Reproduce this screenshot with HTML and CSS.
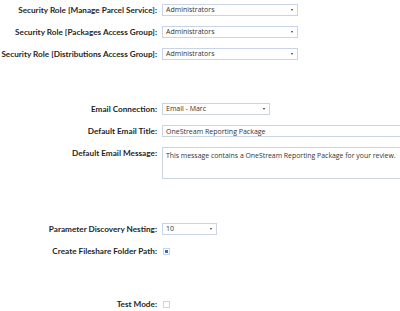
FILE: index.html
```html
<!DOCTYPE html>
<html lang="en">
<head>
    <meta charset="utf-8" />
    <title>Distribution Settings</title>
    <link rel="stylesheet" href="styles.css">
</head>
<body>
    <div class="settings">
        <div class="row">
            <label class="caption">Security Role [Manage Parcel Service]:</label>
            <span class="select-wrap wide">
                <select><option>Administrators</option></select>
            </span>
        </div>
        <div class="row">
            <label class="caption">Security Role [Packages Access Group]:</label>
            <span class="select-wrap wide">
                <select><option>Administrators</option></select>
            </span>
        </div>
        <div class="row">
            <label class="caption">Security Role [Distributions Access Group]:</label>
            <span class="select-wrap wide">
                <select><option>Administrators</option></select>
            </span>
        </div>

        <div class="row group-email">
            <label class="caption">Email Connection:</label>
            <span class="select-wrap medium">
                <select><option>Email - Marc</option></select>
            </span>
        </div>
        <div class="row">
            <label class="caption">Default Email Title:</label>
            <input class="text-box" type="text" value="OneStream Reporting Package" />
        </div>
        <div class="row top">
            <label class="caption">Default Email Message:</label>
            <textarea class="text-area">This message contains a OneStream Reporting Package for your review.</textarea>
        </div>

        <div class="row group-params">
            <label class="caption">Parameter Discovery Nesting:</label>
            <span class="select-wrap small">
                <select><option>10</option></select>
            </span>
        </div>
        <div class="row">
            <label class="caption">Create Fileshare Folder Path:</label>
            <input class="check" type="checkbox" checked />
        </div>

        <div class="row group-test">
            <label class="caption">Test Mode:</label>
            <input class="check" type="checkbox" />
        </div>
    </div>
</body>
</html>
```

FILE: styles.css
```css
* { box-sizing: border-box; margin: 0; padding: 0; }
body {
    font-family: Lato, "Open Sans", sans-serif;
    -webkit-font-smoothing: antialiased;
    background: #fff;
    color: #222;
    overflow: hidden;
}
.settings {
    padding-top: 4px;
    width: 400px;
    overflow: hidden;
}
.row {
    display: flex;
    align-items: center;
    margin-bottom: 10px;
}
.row.top {
    align-items: flex-start;
}
.caption {
    flex: 0 0 162px;
    padding-right: 5px;
    text-align: right;
    font-size: 8.2px;
    font-weight: bold;
    color: #1f1f1f;
    white-space: nowrap;
    line-height: 12px;
}
.group-email { margin-top: 43px; }
.group-params { margin-top: 44px; }
.group-test { margin-top: 41px; }

.select-wrap {
    position: relative;
    display: block;
    flex: 0 0 auto;
    height: 12px;
}
.select-wrap::after {
    content: "";
    position: absolute;
    right: 5px;
    top: 5px;
    border-left: 1.5px solid transparent;
    border-right: 1.5px solid transparent;
    border-top: 2px solid #333;
}
.select-wrap.wide { width: 136px; }
.select-wrap.medium { width: 108px; }
.select-wrap.small { width: 55px; }
select, .text-box, .text-area {
    -webkit-appearance: none;
    appearance: none;
    display: block;
    width: 100%;
    height: 12px;
    border: 1px solid #c9d4e6;
    border-radius: 0;
    background: #fff;
    font-family: "Open Sans", "Noto Sans", sans-serif;
    font-size: 7px;
    color: #333;
    padding: 0 3px;
    line-height: 10px;
    outline: none;
}
.text-box {
    flex: 0 0 260px;
}
.text-area {
    flex: 0 0 260px;
    height: 32px;
    padding: 3px 3px;
    font-size: 6.9px;
    resize: none;
    overflow: hidden;
}
.check {
    -webkit-appearance: none;
    appearance: none;
    width: 7px;
    height: 7px;
    margin-left: 1px;
    border: 1px solid #c9d4e6;
    background: #fff;
    position: relative;
}
.check:checked::after {
    content: "";
    position: absolute;
    left: 1px;
    top: 1px;
    width: 3px;
    height: 3px;
    background: #2f6fc4;
}
```
